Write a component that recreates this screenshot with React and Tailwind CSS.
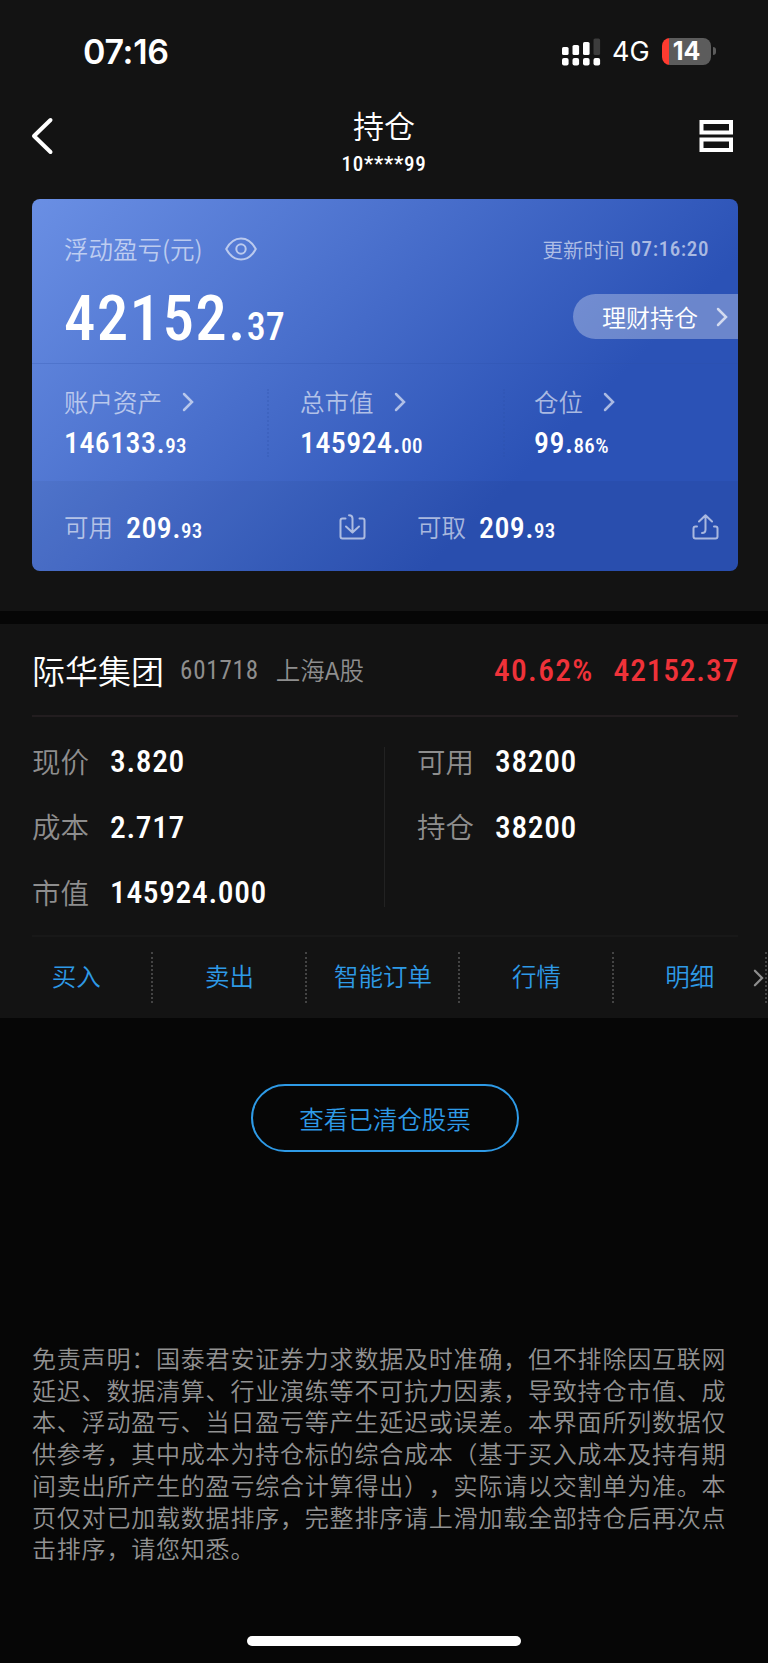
const actions = ["买入", "卖出", "智能订单", "行情", "明细"];

const disclaimer = [
    "免责声明：国泰君安证券力求数据及时准确，但不排除因互联网",
    "延迟、数据清算、行业演练等不可抗力因素，导致持仓市值、成",
    "本、浮动盈亏、当日盈亏等产生延迟或误差。本界面所列数据仅",
    "供参考，其中成本为持仓标的综合成本（基于买入成本及持有期",
    "间卖出所产生的盈亏综合计算得出），实际请以交割单为准。本",
    "页仅对已加载数据排序，完整排序请上滑加载全部持仓后再次点",
    "击排序，请您知悉。",
];

function Num({ className = "", children }) {
    return (
        <span className={`font-[Roboto,sans-serif] font-stretch-80% whitespace-nowrap ${className}`}>
            {children}
        </span>
    );
}

function Chevron({ className = "" }) {
    return (
        <svg className={className} width="12" height="20" viewBox="0 0 12 20" fill="none" stroke="currentColor" strokeWidth="2.5">
            <path d="M2 2l8 8-8 8" strokeLinecap="round" />
        </svg>
    );
}

function StatusBar() {
    return (
        <div className="flex h-[104px] items-center justify-between pr-[52px] pl-[83px] font-[Inter,sans-serif] text-white">
            <span className="text-[34px] leading-[40px] font-semibold tracking-[-0.3px]">07:16</span>
            <div className="flex items-center">
                <svg className="mb-[1px]" width="39" height="28" viewBox="0 0 39 28" fill="#fff">
                    <rect x="0" y="9" width="6.6" height="8" rx="1.6" />
                    <rect x="10.5" y="7" width="6.6" height="10" rx="1.6" />
                    <rect x="21" y="4" width="6.6" height="13" rx="1.6" />
                    <rect x="31.5" y="0.5" width="6.6" height="16.5" rx="1.6" fill="#3d3d3d" />
                    <rect x="0" y="20" width="6.6" height="7.5" rx="2" />
                    <rect x="10.5" y="20" width="6.6" height="7.5" rx="2" />
                    <rect x="21" y="20" width="6.6" height="7.5" rx="2" />
                    <rect x="31.5" y="20" width="6.6" height="7.5" rx="2" />
                </svg>
                <span className="ml-[11px] w-[50px] text-[27px] leading-[34px]">4G</span>
                <div className="mb-[2px] flex h-[27px] w-[49px] items-center justify-center rounded-[8px] bg-linear-to-r from-[#ff3b30] from-[7.5px] to-[#5c5c5c] to-[7.5px]">
                    <span className="text-[25px] leading-[27px] font-bold">14</span>
                </div>
                <div className="mb-[2px] ml-[2px] h-[8px] w-[3px] rounded-r-full bg-[#5c5c5c]"></div>
            </div>
        </div>
    );
}

function Header() {
    return (
        <div className="flex h-[95px] justify-between pr-[35px] pl-[31px] text-white">
            <svg className="mt-[13px]" width="24" height="38" viewBox="0 0 24 38" fill="none" stroke="currentColor" strokeWidth="4" strokeLinecap="round" strokeLinejoin="round">
                <path d="M19.5 3L3 19l16.5 16" />
            </svg>
            <div className="flex flex-col items-center pl-[14px]">
                <h1 className="mt-[5px] text-[31px] leading-[32px] font-[350]">持仓</h1>
                <Num className="mt-[12px] text-[21px] leading-[22px] font-medium tracking-[0.7px]">10****99</Num>
            </div>
            <svg className="mt-[15px]" width="34" height="34" viewBox="0 0 34 34" fill="none" stroke="currentColor" strokeWidth="4">
                <rect x="2.5" y="3" width="29.5" height="10.5" />
                <rect x="2.5" y="20.5" width="29.5" height="10.5" />
            </svg>
        </div>
    );
}

function Amount({ int, dec }) {
    return (
        <div className="leading-[36px] text-white">
            <Num className="text-[30px] font-medium tracking-[0.4px]">{int}</Num>
            <Num className="text-[21px] font-medium tracking-[0.3px]">{dec}</Num>
        </div>
    );
}

function Stat({ label, int, dec, className }) {
    return (
        <div className={className}>
            <div className="mb-[10px] flex h-[26px] items-center text-white/60">
                <span className="text-[24.5px] leading-none font-[350]">{label}</span>
                <Chevron className="ml-[20px]" />
            </div>
            <Amount int={int} dec={dec} />
        </div>
    );
}

function AssetCard() {
    return (
        <div className="mr-[30px] ml-[32px] h-[372px] overflow-hidden rounded-[8px] bg-[linear-gradient(135deg,#6a8fe4_0%,#2b52b6_71%)]">
            <div className="flex h-[165px] justify-between border-b border-[#2d50a8]/25 pl-[32px]">
                <div>
                    <div className="mt-[36px] flex h-[28px] items-center text-white/60">
                        <span className="text-[24.5px] leading-none font-[350]">浮动盈亏(元)</span>
                        <svg className="ml-[22px]" width="32" height="24" viewBox="0 0 32 24" fill="none" stroke="currentColor" strokeWidth="2">
                            <path d="M1.2 12C5 5 10 1.5 16 1.5S27 5 30.8 12C27 19 22 22.5 16 22.5S5 19 1.2 12z" strokeLinejoin="round" />
                            <circle cx="16" cy="12" r="4.7" />
                        </svg>
                    </div>
                    <div className="mt-[21px] leading-[70px] text-white">
                        <Num className="text-[63px] font-medium tracking-[1.3px]">42152.</Num>
                        <Num className="text-[38px] font-medium">37</Num>
                    </div>
                </div>
                <div className="flex flex-col items-end">
                    <div className="mt-[37px] mr-[29px] flex h-[26px] items-center text-white/60">
                        <span className="text-[20.5px] leading-none font-[350]">更新时间</span>
                        <Num className="ml-[6px] text-[21px] leading-none font-medium tracking-[0.6px]">07:16:20</Num>
                    </div>
                    <div className="mt-[32px] flex h-[45px] w-[165px] items-center rounded-l-full bg-white/30 pl-[29px] text-white">
                        <span className="text-[24px] leading-none font-[350]">理财持仓</span>
                        <Chevron className="ml-[18px] text-white/70" />
                    </div>
                </div>
            </div>
            <div className="flex h-[117px] pt-[25px]">
                <Stat className="w-[235px] pl-[32px]" label="账户资产" int="146133." dec="93" />
                <div className="h-[68px] border-l-2 border-dotted border-[#2d50a8]/25"></div>
                <Stat className="w-[234px] pl-[31px]" label="总市值" int="145924." dec="00" />
                <div className="h-[68px] border-l-2 border-dotted border-[#2d50a8]/25"></div>
                <Stat className="pl-[29px]" label="仓位" int="99." dec="86%" />
            </div>
            <div className="flex h-[90px] items-center bg-black/4 pt-[2px] pl-[32px] text-white/60">
                <span className="text-[24.5px] leading-none font-[350]">可用</span>
                <div className="mt-[5px] ml-[13px] w-[213px]">
                    <Amount int="209." dec="93" />
                </div>
                <svg width="27" height="27" viewBox="0 0 27 27" fill="none" stroke="currentColor" strokeWidth="2" strokeLinecap="round" strokeLinejoin="round">
                    <path d="M6.5 4.5H3.5Q1.5 4.5 1.5 6.5V22.5Q1.5 24.5 3.5 24.5H23.5Q25.5 24.5 25.5 22.5V6.5Q25.5 4.5 23.5 4.5H20.5M10 1.2Q13.5 1.2 13.5 4.5V18M7 12.5L13.5 18.5 20 12.5" />
                </svg>
                <span className="ml-[51px] text-[24.5px] leading-none font-[350]">可取</span>
                <div className="mt-[5px] ml-[13px] w-[213px]">
                    <Amount int="209." dec="93" />
                </div>
                <svg width="27" height="27" viewBox="0 0 27 27" fill="none" stroke="currentColor" strokeWidth="2" strokeLinecap="round" strokeLinejoin="round">
                    <path d="M5 12.5H3.5Q1.5 12.5 1.5 14.5V22.5Q1.5 24.5 3.5 24.5H23.5Q25.5 24.5 25.5 22.5V14.5Q25.5 12.5 23.5 12.5H22M10 19Q13.5 19 13.5 15.5V1.5M7 7.5L13.5 1.2 20 7.5" />
                </svg>
            </div>
        </div>
    );
}

function Field({ label, value }) {
    return (
        <div className="flex h-[65.5px] items-center">
            <span className="mb-[2px] w-[78px] text-[28.5px] leading-none font-[350] text-[#8e8e8e]">{label}</span>
            <Num className="text-[31.5px] leading-none font-medium tracking-[0.65px] text-white">{value}</Num>
        </div>
    );
}

function Position() {
    return (
        <div className="h-[394px] bg-[#131313]">
            <div className="mr-[30px] ml-[32px] flex h-[93px] items-center border-b-2 border-[#221d1f] pt-[2px]">
                <span className="text-[33px] leading-none font-[350] text-white">际华集团</span>
                <Num className="ml-[16px] text-[25px] leading-none tracking-[0.8px] text-[#8e8e8e]">601718</Num>
                <span className="ml-[17px] text-[24.5px] leading-none font-[350] text-[#8e8e8e]">上海A股</span>
                <Num className="mt-[1px] ml-auto text-[31.5px] leading-none font-medium tracking-[1.3px] text-[#ef3239]">40.62%</Num>
                <Num className="mt-[1px] mr-[-1px] ml-[20px] text-[31.5px] leading-none font-medium tracking-[0.8px] text-[#ef3239]">42152.37</Num>
            </div>
            <div className="mr-[30px] ml-[32px] flex h-[220px] border-b-2 border-[#181818] pt-[12px]">
                <div className="w-[352px]">
                    <Field label="现价" value="3.820" />
                    <Field label="成本" value="2.717" />
                    <Field label="市值" value="145924.000" />
                </div>
                <div className="mt-[18px] h-[160px] border-l border-[#222]"></div>
                <div className="pl-[32px]">
                    <Field label="可用" value="38200" />
                    <Field label="持仓" value="38200" />
                </div>
            </div>
            <div className="relative mr-[1px] grid h-[81px] grid-cols-5 py-[15px]">
                {actions.map((name) => (
                    <div key={name} className="flex items-center justify-center border-r-2 border-dotted border-[#444] pb-[2px] pl-[1px] text-[24.5px] leading-none font-[350] text-[#2e9ae6]">
                        {name}
                    </div>
                ))}
                <Chevron className="absolute top-[32px] right-[3px] h-[18px] w-[11px] text-[#8e8e8e]" />
            </div>
        </div>
    );
}

function App() {
    return (
        <div className="flex h-[1663px] w-[768px] flex-col overflow-hidden bg-[#060606] font-['Noto_Sans_CJK_SC',sans-serif]">
            <div className="h-[611px] bg-[#131313]">
                <StatusBar />
                <Header />
                <AssetCard />
            </div>
            <div className="h-[13px]"></div>
            <Position />
            <button className="mt-[66px] ml-[251px] h-[68px] w-[268px] rounded-full border-2 border-[#2e9ae6] pt-[2px] text-[24.5px] leading-none font-[350] text-[#2e9ae6]">
                查看已清仓股票
            </button>
            <div className="mt-[190px] ml-[32px] text-[24px] leading-[31.7px] font-[350] tracking-[0.8px] whitespace-nowrap text-[#929292] [text-spacing-trim:space-all]">
                {disclaimer.map((line) => (
                    <p key={line}>{line}</p>
                ))}
            </div>
            <div className="mt-auto mb-[17px] ml-[247px] h-[10px] w-[274px] rounded-full bg-white"></div>
        </div>
    );
}

export default App;
